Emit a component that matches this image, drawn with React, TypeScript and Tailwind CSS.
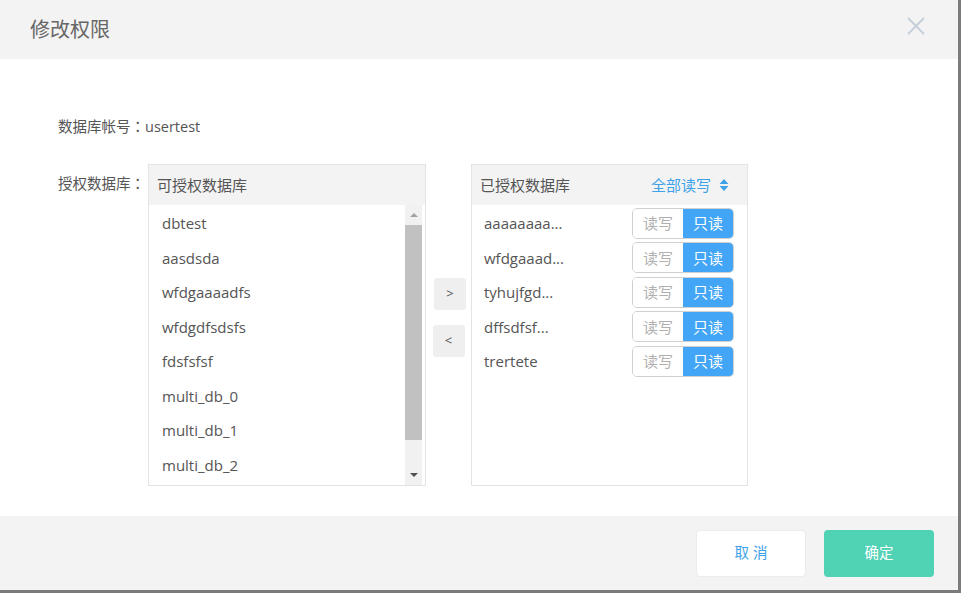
import React from "react";

const font = { fontFamily: '"Open Sans", "Noto Sans CJK SC", sans-serif' };

const leftItems = ["dbtest", "aasdsda", "wfdgaaaadfs", "wfdgdfsdsfs", "fdsfsfsf", "multi_db_0", "multi_db_1", "multi_db_2"];
const rightItems = ["aaaaaaaa...", "wfdgaaad...", "tyhujfgd...", "dffsdfsf...", "trertete"];

function Colon() {
  return <span style={{ fontFamily: '"Noto Sans CJK TC", sans-serif' }}>：</span>;
}

export default function App() {
  return (
    <div className="w-[961px] h-[593px] bg-[#7b7b7b] overflow-hidden" style={font}>
      <div className="w-[958px] h-[590px] bg-white flex flex-col">
        <div className="h-[59px] bg-[#f3f3f3] flex items-center justify-between pl-[30px] pr-[33px]">
          <span className="text-[20px] text-[#666]">修改权限</span>
          <svg width="18" height="18" viewBox="0 0 18 18" className="text-[#c5ced8] -mt-[7px]">
            <path d="M1 1 L17 17 M17 1 L1 17" stroke="currentColor" strokeWidth="2" />
          </svg>
        </div>
        <div className="flex-1 relative pl-[58px]">
          <div className="mt-[57px] h-[20px] text-[14.5px] text-[#555] leading-[20px]">数据库帐号<Colon />usertest</div>
          <div className="mt-[28px] flex items-start">
            <div className="w-[90px] text-[14.5px] text-[#555] leading-[20px] mt-[9px]">授权数据库<Colon /></div>
            <div className="w-[278px] h-[322px] border border-[#e3e3e3] flex flex-col">
              <div className="h-[40px] bg-[#f3f3f3] flex items-center pl-[8px] text-[15px] text-[#555]">可授权数据库</div>
              <div className="flex-1 flex pr-[3px]">
                <div className="flex-1 pl-[13px] pt-[1px]">
                  {leftItems.map((t) => (
                    <div key={t} className="h-[34.5px] flex items-center text-[15px] text-[#555]">{t}</div>
                  ))}
                </div>
                <div className="w-[17px] bg-[#f1f1f1] flex flex-col items-center">
                  <div className="h-[20px] flex items-center justify-center">
                    <div className="w-0 h-0 border-l-[4px] border-r-[4px] border-b-[4px] border-l-transparent border-r-transparent border-b-[#a3a3a3]" />
                  </div>
                  <div className="w-[17px] h-[215px] bg-[#c1c1c1]" />
                  <div className="flex-1" />
                  <div className="h-[20px] flex items-center justify-center">
                    <div className="w-0 h-0 border-l-[4px] border-r-[4px] border-t-[4px] border-l-transparent border-r-transparent border-t-[#505050]" />
                  </div>
                </div>
              </div>
            </div>
            <div className="w-[45px] flex flex-col items-center pt-[114px]">
              <div className="w-[32px] h-[32px] ml-[3px] rounded-[3px] bg-[#efefef] flex items-center justify-center text-[13px] text-[#555]">&gt;</div>
              <div className="w-[32px] h-[32px] mt-[15px] rounded-[3px] bg-[#efefef] flex items-center justify-center text-[13px] text-[#555]">&lt;</div>
            </div>
            <div className="w-[277px] h-[322px] border border-[#e3e3e3] flex flex-col">
              <div className="h-[40px] bg-[#f3f3f3] flex items-center justify-between pl-[8px] pr-[18px] text-[15px]">
                <span className="text-[#555]">已授权数据库</span>
                <span className="flex items-center gap-[8px] text-[#3ea2e8]">
                  全部读写
                  <svg width="10" height="14" viewBox="0 0 10 14">
                    <path d="M5 1 L9.5 6 H0.5 Z M5 13 L9.5 8 H0.5 Z" fill="#3ea2e8" />
                  </svg>
                </span>
              </div>
              <div className="pt-[1px] pl-[12px] pr-[13px]">
                {rightItems.map((t) => (
                  <div key={t} className="h-[34.5px] flex items-center justify-between">
                    <span className="text-[15px] text-[#555]">{t}</span>
                    <div className="flex w-[102px] h-[31px] rounded-[5px] border border-[#d0d0d0] overflow-hidden text-[15px]">
                      <div className="flex-1 bg-white text-[#b0b0b0] flex items-center justify-center">读写</div>
                      <div className="flex-1 bg-[#42a5f5] text-white flex items-center justify-center">只读</div>
                    </div>
                  </div>
                ))}
              </div>
            </div>
          </div>
        </div>
        <div className="h-[74px] bg-[#f3f3f3] flex items-center justify-end pr-[24px] gap-[18px]">
          <div className="w-[110px] h-[47px] bg-white rounded-[4px] border border-[#ececec] flex items-center justify-center text-[14.5px] text-[#3ea2e8] tracking-[4px] pl-[4px]">取消</div>
          <div className="w-[110px] h-[47px] bg-[#50d2b5] rounded-[4px] flex items-center justify-center text-[14.5px] text-white">确定</div>
        </div>
      </div>
    </div>
  );
}
